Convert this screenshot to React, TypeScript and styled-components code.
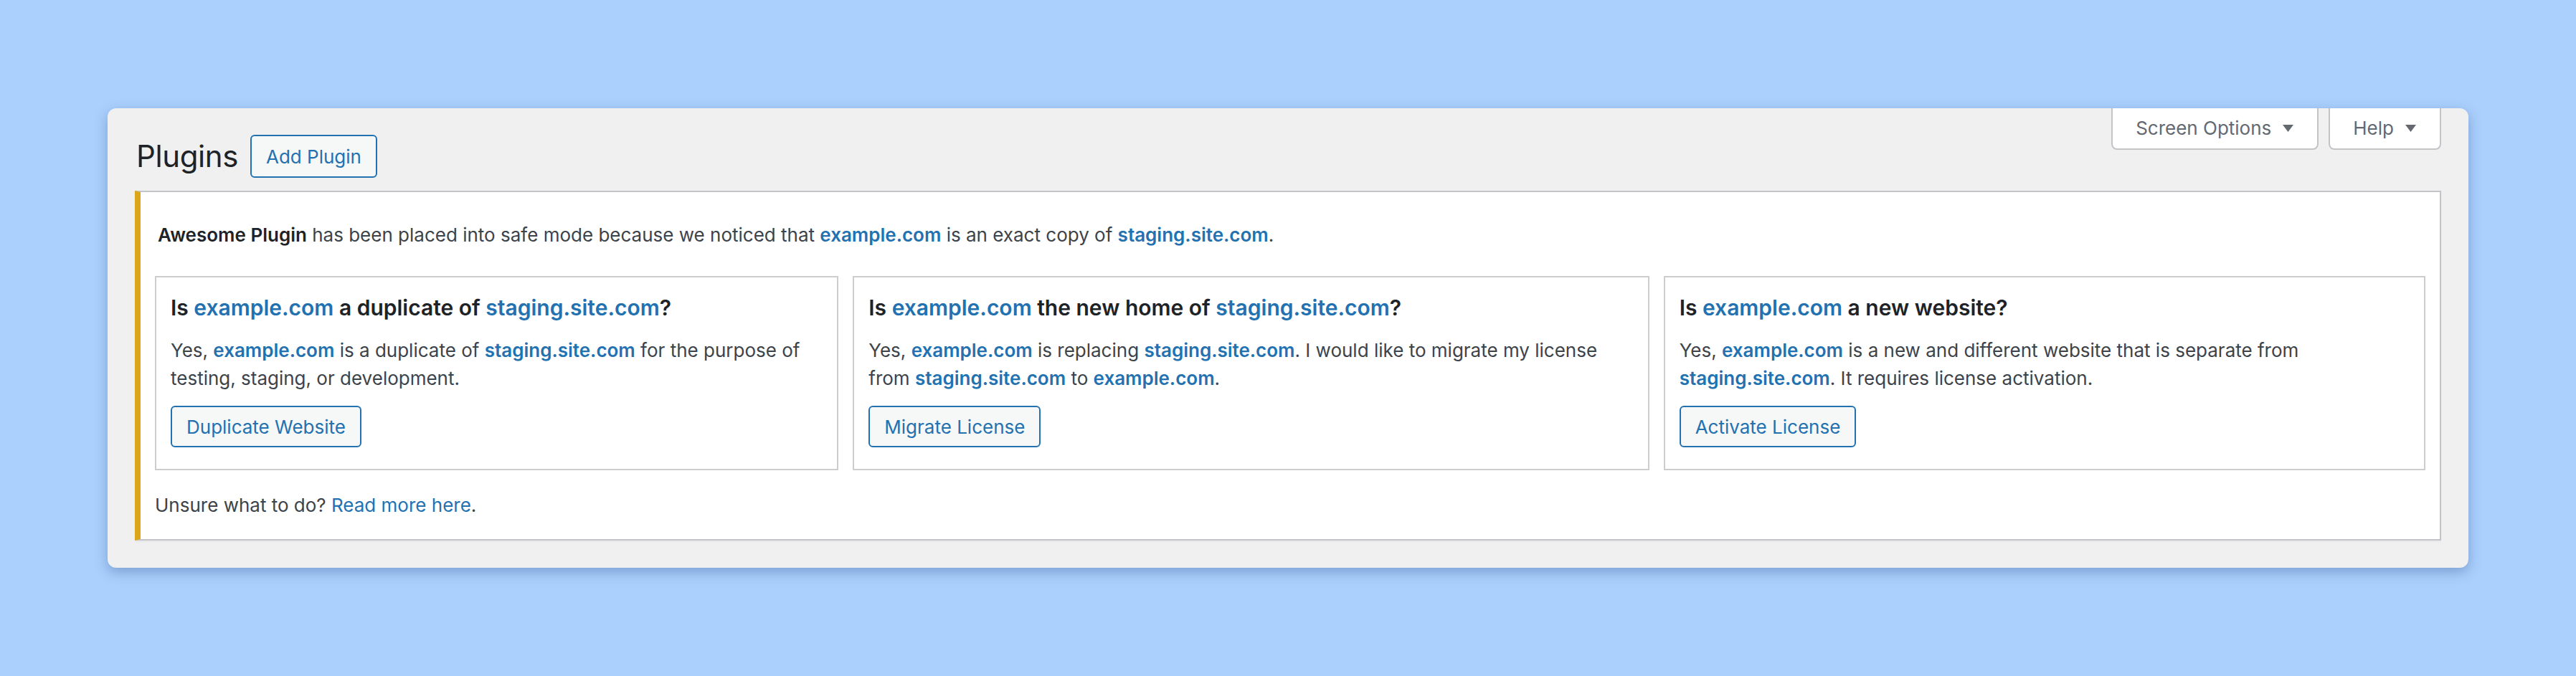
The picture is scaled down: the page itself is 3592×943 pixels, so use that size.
import styled, { createGlobalStyle } from "styled-components";

const GlobalStyle = createGlobalStyle`
  html, body {
    margin: 0;
    padding: 0;
  }
  body {
    background: #abd0fd;
    font-family: Inter, "Noto Sans", "Liberation Sans", sans-serif;
    color: #3c434a;
  }
  * {
    box-sizing: border-box;
  }
`;

const Page = styled.div`
  min-height: 100vh;
  display: flex;
  align-items: center;
  justify-content: center;
`;

const Window = styled.div`
  width: 3292px;
  background: #f0f0f1;
  border-radius: 12px;
  box-shadow: 0 6px 18px rgba(35, 70, 130, 0.35);
  padding: 0 38px 38px;
`;

const TopBar = styled.div`
  display: flex;
  justify-content: space-between;
  align-items: flex-start;
`;

const TitleRow = styled.div`
  display: flex;
  align-items: center;
  gap: 17px;
  padding: 37px 0 0 2px;
`;

const Title = styled.h1`
  margin: 0;
  font-size: 42px;
  line-height: 60px;
  font-weight: 400;
  letter-spacing: -0.4px;
  color: #1d2327;
`;

const Button = styled.button<{ $tall?: boolean }>`
  font-family: inherit;
  font-size: 26px;
  height: ${(p) => (p.$tall ? "60px" : "58px")};
  padding: 0 20px;
  border: 2px solid #2271b1;
  border-radius: 6px;
  background: #f6f7f7;
  color: #2271b1;
  cursor: pointer;
  white-space: nowrap;
`;

const ScreenMeta = styled.div`
  display: flex;
  gap: 14px;
`;

const Tab = styled.div`
  display: flex;
  align-items: center;
  gap: 16px;
  padding: 6px 33px 6px 32px;
  font-size: 26px;
  line-height: 44px;
  color: #646970;
  background: #fff;
  border: 2px solid #c3c4c7;
  border-top: none;
  border-radius: 0 0 8px 8px;
`;

const Notice = styled.div`
  margin-top: 18px;
  background: #fff;
  border: 2px solid #c3c4c7;
  border-left: 8px solid #dba617;
  box-shadow: 0 2px 2px rgba(0, 0, 0, 0.04);
  padding: 40px 20px 28px;
`;

const Text = styled.p<{ $indent?: boolean }>`
  margin: 0;
  font-size: 26px;
  line-height: 39px;
  padding-left: ${(p) => (p.$indent ? "4px" : "0")};
`;

const Strong = styled.strong`
  font-weight: 600;
  color: #1d2327;
`;

const Link = styled.a`
  color: #2271b1;
  text-decoration: none;
`;

const Site = styled(Link)`
  font-weight: 600;
`;

const Choices = styled.div`
  display: grid;
  grid-template-columns: 953fr 1110fr 1062fr;
  gap: 20px;
  margin: 38px 0 29px;
`;

const Choice = styled.div`
  display: flex;
  flex-direction: column;
  align-items: flex-start;
  gap: 19px;
  border: 2px solid #cdcdcd;
  padding: 21px 20px 30px;
`;

const ChoiceTitle = styled.h3`
  margin: 0;
  font-size: 30px;
  line-height: 42px;
  font-weight: 600;
  color: #1d2327;
`;

const Caret = () => (
  <svg width="15" height="10" viewBox="0 0 15 10">
    <path d="M0 0h15L7.5 10z" fill="#646970" />
  </svg>
);

const choices = [
  {
    title: (
      <>
        Is <Site href="#">example.com</Site> a duplicate of{" "}
        <Site href="#">staging.site.com</Site>?
      </>
    ),
    text: (
      <>
        Yes, <Site href="#">example.com</Site> is a duplicate of{" "}
        <Site href="#">staging.site.com</Site> for the purpose of testing,
        staging, or development.
      </>
    ),
    action: "Duplicate Website",
  },
  {
    title: (
      <>
        Is <Site href="#">example.com</Site> the new home of{" "}
        <Site href="#">staging.site.com</Site>?
      </>
    ),
    text: (
      <>
        Yes, <Site href="#">example.com</Site> is replacing{" "}
        <Site href="#">staging.site.com</Site>. I would like to migrate my
        license from <Site href="#">staging.site.com</Site> to{" "}
        <Site href="#">example.com</Site>.
      </>
    ),
    action: "Migrate License",
  },
  {
    title: (
      <>
        Is <Site href="#">example.com</Site> a new website?
      </>
    ),
    text: (
      <>
        Yes, <Site href="#">example.com</Site> is a new and different website
        that is separate from <Site href="#">staging.site.com</Site>. It
        requires license activation.
      </>
    ),
    action: "Activate License",
  },
];

function App() {
  return (
    <>
      <GlobalStyle />
      <Page>
        <Window>
          <TopBar>
            <TitleRow>
              <Title>Plugins</Title>
              <Button $tall>Add Plugin</Button>
            </TitleRow>
            <ScreenMeta>
              <Tab>
                Screen Options <Caret />
              </Tab>
              <Tab>
                Help <Caret />
              </Tab>
            </ScreenMeta>
          </TopBar>
          <Notice>
            <Text $indent>
              <Strong>Awesome Plugin</Strong> has been placed into safe mode
              because we noticed that <Site href="#">example.com</Site> is an
              exact copy of <Site href="#">staging.site.com</Site>.
            </Text>
            <Choices>
              {choices.map((c) => (
                <Choice key={c.action}>
                  <ChoiceTitle>{c.title}</ChoiceTitle>
                  <Text>{c.text}</Text>
                  <Button>{c.action}</Button>
                </Choice>
              ))}
            </Choices>
            <Text>
              Unsure what to do? <Link href="#">Read more here</Link>.
            </Text>
          </Notice>
        </Window>
      </Page>
    </>
  );
}

export default App;
